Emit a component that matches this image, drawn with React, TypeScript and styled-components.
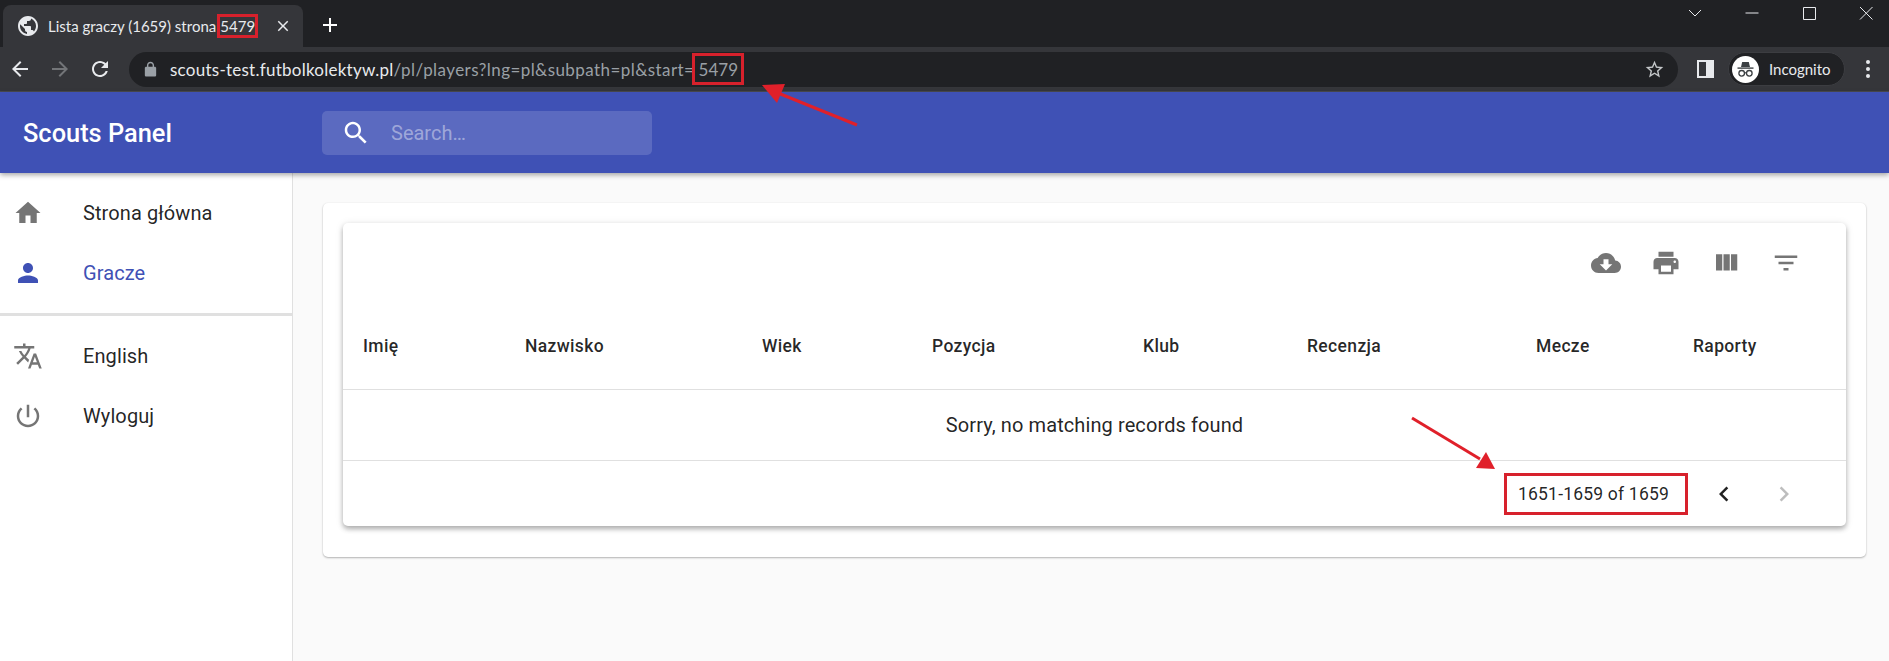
import React from "react";
import styled, { createGlobalStyle } from "styled-components";

const Global = createGlobalStyle`
  html, body { margin: 0; padding: 0; height: 100%; background: #fafafa; }
  * { box-sizing: border-box; }
  #root { height: 100%; }
`;

const P = {
  home: "M10 20v-6h4v6h5v-8h3L12 3 2 12h3v8z",
  person: "M12 12c2.21 0 4-1.79 4-4s-1.79-4-4-4-4 1.79-4 4 1.79 4 4 4zm0 2c-2.67 0-8 1.34-8 4v2h16v-2c0-2.66-5.33-4-8-4z",
  translate: "M12.87 15.07l-2.54-2.51.03-.03c1.74-1.94 2.98-4.17 3.71-6.53H17V4h-7V2H8v2H1v1.99h11.17C11.5 7.92 10.44 9.75 9 11.35 8.07 10.32 7.3 9.19 6.69 8h-2c.73 1.63 1.73 3.17 2.98 4.56l-5.09 5.02L4 19l5-5 3.11 3.11.76-2.04zM18.5 10h-2L12 22h2l1.12-3h4.75L21 22h2l-4.5-12zm-2.62 7l1.62-4.33L19.12 17h-3.24z",
  power: "M13 3h-2v10h2V3zm4.83 2.17l-1.42 1.42C17.99 7.86 19 9.81 19 12c0 3.87-3.13 7-7 7s-7-3.13-7-7c0-2.19 1.01-4.14 2.58-5.42L6.17 5.17C4.23 6.82 3 9.26 3 12c0 4.97 4.03 9 9 9s9-4.03 9-9c0-2.74-1.23-5.18-3.17-6.83z",
  search: "M15.5 14h-.79l-.28-.27C15.41 12.59 16 11.11 16 9.5 16 5.91 13.09 3 9.5 3S3 5.91 3 9.5 5.91 16 9.5 16c1.61 0 3.09-.59 4.23-1.57l.27.28v.79l5 4.99L20.49 19l-4.99-5zm-6 0C7.01 14 5 11.99 5 9.5S7.01 5 9.5 5 14 7.01 14 9.5 11.99 14 9.5 14z",
  cloud: "M19.35 10.04C18.67 6.59 15.64 4 12 4 9.11 4 6.6 5.64 5.35 8.04 2.34 8.36 0 10.91 0 14c0 3.31 2.69 6 6 6h13c2.76 0 5-2.24 5-5 0-2.64-2.05-4.78-4.65-4.96zM17 13l-5 5-5-5h3V9h4v4h3z",
  print: "M19 8H5c-1.66 0-3 1.34-3 3v6h4v4h12v-4h4v-6c0-1.66-1.34-3-3-3zm-3 11H8v-5h8v5zm3-7c-.55 0-1-.45-1-1s.45-1 1-1 1 .45 1 1-.45 1-1 1zm-1-9H6v4h12V3z",
  columns: "M10 18h5V5h-5v13zm-6 0h5V5H4v13zM16 5v13h5V5h-5z",
  filter: "M10 18h4v-2h-4v2zM3 6v2h18V6H3zm3 7h12v-2H6v2z",
  left: "M15.41 7.41L14 6l-6 6 6 6 1.41-1.41L10.83 12z",
  right: "M10 6L8.59 7.41 13.17 12l-4.58 4.59L10 18l6-6z",
  globe: "M12 2C6.48 2 2 6.48 2 12s4.48 10 10 10 10-4.48 10-10S17.52 2 12 2zm-1 17.93c-3.95-.49-7-3.85-7-7.93 0-.62.08-1.21.21-1.79L9 15v1c0 1.1.9 2 2 2v1.93zm6.9-2.54c-.26-.81-1-1.39-1.9-1.39h-1v-3c0-.55-.45-1-1-1H8v-2h2c.55 0 1-.45 1-1V7h2c1.1 0 2-.9 2-2v-.41c2.93 1.19 5 4.06 5 7.41 0 2.08-.8 3.97-2.1 5.39z",
  star: "M22 9.24l-7.19-.62L12 2 9.19 8.63 2 9.24l5.46 4.73L5.82 21 12 17.27 18.18 21l-1.63-7.03L22 9.24zM12 15.4l-3.76 2.27 1-4.28-3.32-2.88 4.38-.38L12 6.1l1.71 4.04 4.38.38-3.32 2.88 1 4.28L12 15.4z",
  close: "M19 6.41L17.59 5 12 10.59 6.41 5 5 6.41 10.59 12 5 17.59 6.41 19 12 13.41 17.59 19 19 17.59 13.41 12z",
  plus: "M19 13h-6v6h-2v-6H5v-2h6V5h2v6h6v2z",
  back: "M20 11H7.83l5.59-5.59L12 4l-8 8 8 8 1.41-1.41L7.83 13H20v-2z",
  forward: "M12 4l-1.41 1.41L16.17 11H4v2h12.17l-5.58 5.59L12 20l8-8z",
  reload: "M17.65 6.35C16.2 4.9 14.21 4 12 4c-4.42 0-7.99 3.58-7.99 8s3.57 8 7.99 8c3.73 0 6.84-2.55 7.73-6h-2.08c-.82 2.33-3.04 4-5.65 4-3.31 0-6-2.69-6-6s2.69-6 6-6c1.66 0 3.14.69 4.22 1.78L13 11h7V4l-2.35 2.35z",
  lock: "M18 8h-1V6c0-2.76-2.24-5-5-5S7 3.24 7 6v2H6c-1.1 0-2 .9-2 2v10c0 1.1.9 2 2 2h12c1.1 0 2-.9 2-2V10c0-1.1-.9-2-2-2zM9 6c0-1.66 1.34-3 3-3s3 1.34 3 3v2H9V6z",
};

const Svg = styled.svg<{ $size: number; $color: string }>`
  width: ${(p) => p.$size}px;
  height: ${(p) => p.$size}px;
  fill: ${(p) => p.$color};
  flex: none;
  display: block;
`;

const Icon = ({ d, size = 30, color = "#757575" }: { d: string; size?: number; color?: string }) => (
  <Svg viewBox="0 0 24 24" $size={size} $color={color}>
    <path d={d} />
  </Svg>
);

const Page = styled.div`
  position: relative;
  height: 661px;
  overflow: hidden;
  display: flex;
  flex-direction: column;
  background: #fafafa;
  font-family: Roboto, "Liberation Sans", sans-serif;
`;

const TabStrip = styled.div`
  height: 47px;
  flex: none;
  display: flex;
  align-items: flex-end;
  background: #202124;
  padding-left: 3px;
`;

const Tab = styled.div`
  width: 300px;
  height: 42px;
  display: flex;
  align-items: center;
  background: #35363a;
  border-radius: 8px 8px 0 0;
  padding-left: 13px;
  color: #e8eaed;
  font: 15px Lato, "Open Sans", sans-serif;
  white-space: nowrap;
`;

const TabTitle = styled.span`
  margin-left: 8px;
  display: flex;
  align-items: center;
`;

const Marked = styled.span`
  border: 3px solid #d7212c;
  display: inline-flex;
  align-items: center;
  justify-content: center;
`;

const TabMark = styled(Marked)`
  width: 41px;
  height: 24px;
  margin-left: 1px;
`;

const TabClose = styled.div`
  margin-left: 16px;
`;

const NewTab = styled.div`
  margin: 0 0 10px 15px;
  align-self: flex-end;
`;

const WindowControls = styled.div`
  margin-left: auto;
  align-self: flex-start;
  height: 25px;
  padding-right: 15px;
  display: flex;
  align-items: center;
  gap: 41px;
`;

const WinSvg = styled.svg`
  width: 16px;
  height: 16px;
  stroke: #e8eaed;
  fill: none;
  stroke-width: 1;
  display: block;
`;

const Toolbar = styled.div`
  height: 45px;
  flex: none;
  display: flex;
  align-items: center;
  background: #35363a;
  padding: 0 19px 0 8px;
  border-bottom: 1px solid #4a4b50;
`;

const NavGroup = styled.div`
  display: flex;
  gap: 16px;
`;

const Omnibox = styled.div`
  margin-left: 17px;
  flex: 1;
  height: 35px;
  border-radius: 18px;
  background: #202124;
  display: flex;
  align-items: center;
  padding: 0 13px;
  font: 17px Lato, "Open Sans", sans-serif;
  color: #9aa0a6;
  white-space: nowrap;
`;

const Url = styled.span`
  margin-left: 11px;
  display: flex;
  align-items: center;
`;

const Host = styled.span`
  color: #e8eaed;
  letter-spacing: 0.25px;
`;

const Path = styled.span`
  letter-spacing: 0.43px;
`;

const UrlMark = styled(Marked)`
  width: 52px;
  height: 32px;
  margin-left: -2px;
`;

const Star = styled.div`
  margin-left: auto;
`;

const SidePanel = styled.div`
  margin-left: 19px;
  width: 17px;
  height: 18px;
  border: 2px solid #e8eaed;
  border-right-width: 8px;
  flex: none;
`;

const ProfilePill = styled.div`
  margin-left: 14px;
  width: 117px;
  height: 34px;
  flex: none;
  border-radius: 17px;
  background: #202124;
  border: 1px solid #3c3d41;
  display: flex;
  align-items: center;
  padding-left: 3px;
  color: #e8eaed;
  font: 15px Lato, "Open Sans", sans-serif;
`;

const Avatar = styled.svg`
  width: 27px;
  height: 27px;
  display: block;
  flex: none;
`;

const PillLabel = styled.span`
  margin-left: 10px;
`;

const Dots = styled.div`
  margin-left: 21px;
  display: flex;
  flex-direction: column;
  gap: 3px;
`;

const Dot = styled.i`
  width: 4px;
  height: 4px;
  border-radius: 50%;
  background: #e8eaed;
  display: block;
`;

const AppBar = styled.header`
  position: relative;
  z-index: 2;
  height: 81px;
  flex: none;
  display: flex;
  align-items: center;
  background: #3f51b5;
  box-shadow: 0 2px 5px rgba(0, 0, 0, 0.35);
`;

const Brand = styled.h1`
  width: 322px;
  margin: 0;
  padding-left: 23px;
  flex: none;
  color: #fff;
  font-size: 25.4px;
  font-weight: 500;
`;

const SearchBox = styled.div`
  width: 330px;
  height: 44px;
  border-radius: 5px;
  background: rgba(255, 255, 255, 0.15);
  display: flex;
  align-items: center;
  padding-left: 19px;
`;

const SearchInput = styled.input`
  margin-left: 20px;
  width: 240px;
  border: 0;
  outline: 0;
  background: transparent;
  color: #fff;
  font: 20px Roboto, sans-serif;
  padding: 0;
  &::placeholder {
    color: rgba(255, 255, 255, 0.42);
    opacity: 1;
  }
`;

const Body = styled.div`
  flex: 1;
  display: flex;
  min-height: 0;
`;

const Sidebar = styled.nav`
  width: 293px;
  flex: none;
  background: #fff;
  border-right: 1px solid #e0e0e0;
  padding-top: 10px;
`;

const NavItem = styled.div<{ $active?: boolean }>`
  height: 60px;
  display: flex;
  align-items: center;
  padding-left: 13px;
  gap: 40px;
  font-size: 20px;
  letter-spacing: 0.1px;
  color: ${(p) => (p.$active ? "#3f51b5" : "rgba(0,0,0,0.87)")};
`;

const NavDivider = styled.hr`
  margin: 10px 0 10px;
  border: 0;
  height: 3px;
  background: #e0e0e0;
`;

const Main = styled.main`
  flex: 1;
  padding: 30px 23px 0 30px;
`;

const OuterPaper = styled.section`
  height: 354px;
  padding: 20px;
  background: #fff;
  border-radius: 5px;
  box-shadow: 0 1px 2px rgba(0, 0, 0, 0.28), 0 0 2px rgba(0, 0, 0, 0.06);
`;

const TablePaper = styled.div`
  height: 303px;
  background: #fff;
  border-radius: 5px;
  box-shadow: 0 3px 5px rgba(0, 0, 0, 0.28), 0 1px 8px rgba(0, 0, 0, 0.1);
  display: flex;
  flex-direction: column;
`;

const TableTools = styled.div`
  height: 80px;
  flex: none;
  display: flex;
  align-items: center;
  justify-content: flex-end;
  gap: 30px;
  padding-right: 45px;
`;

const HeadRow = styled.div`
  height: 87px;
  flex: none;
  display: grid;
  grid-template-columns: 182px 237px 170px 211px 164px 229px 157px 1fr;
  align-items: center;
  padding-bottom: 1px;
  border-bottom: 1px solid #e0e0e0;
`;

const HeadCell = styled.div`
  padding-left: 20px;
  &:not(:first-child) {
    padding-left: 0;
  }
  font-size: 17.5px;
  font-weight: 500;
  letter-spacing: 0.35px;
  color: rgba(0, 0, 0, 0.85);
`;

const EmptyRow = styled.div`
  height: 71px;
  flex: none;
  display: flex;
  align-items: center;
  justify-content: center;
  border-bottom: 1px solid #e0e0e0;
  font-size: 20px;
  letter-spacing: 0.1px;
  color: rgba(0, 0, 0, 0.87);
`;

const Footer = styled.div`
  flex: 1;
  display: flex;
  align-items: center;
  justify-content: flex-end;
  padding-right: 47px;
`;

const PageMark = styled(Marked)`
  width: 184px;
  height: 42px;
  margin-right: 21px;
  padding-left: 11px;
  justify-content: flex-start;
  font-size: 17.5px;
  letter-spacing: 0.2px;
  color: rgba(0, 0, 0, 0.87);
`;

const PageButtons = styled.div`
  display: flex;
  gap: 30px;
`;

const Annotations = styled.svg`
  position: absolute;
  inset: 0;
  z-index: 5;
  width: 1889px;
  height: 661px;
  pointer-events: none;
`;

const heads = ["Imię", "Nazwisko", "Wiek", "Pozycja", "Klub", "Recenzja", "Mecze", "Raporty"];

export default function App() {
  return (
    <Page>
      <Global />
      <TabStrip>
        <Tab>
          <Icon d={P.globe} size={24} color="#e8eaed" />
          <TabTitle>
            Lista graczy (1659) strona<TabMark>5479</TabMark>
          </TabTitle>
          <TabClose>
            <Icon d={P.close} size={18} color="#e8eaed" />
          </TabClose>
        </Tab>
        <NewTab>
          <Icon d={P.plus} size={24} color="#fff" />
        </NewTab>
        <WindowControls>
          <WinSvg viewBox="0 0 16 16"><path d="M2 5l6 6 6-6" /></WinSvg>
          <WinSvg viewBox="0 0 16 16"><path d="M1.5 8h13" /></WinSvg>
          <WinSvg viewBox="0 0 16 16"><path d="M2.5 2.5h12v12h-12z" /></WinSvg>
          <WinSvg viewBox="0 0 16 16"><path d="M2 2l12.5 12.5M14.5 2L2 14.5" /></WinSvg>
        </WindowControls>
      </TabStrip>
      <Toolbar>
        <NavGroup>
          <Icon d={P.back} size={24} color="#e8eaed" />
          <Icon d={P.forward} size={24} color="#737578" />
          <Icon d={P.reload} size={24} color="#e8eaed" />
        </NavGroup>
        <Omnibox>
          <Icon d={P.lock} size={17} color="#9aa0a6" />
          <Url>
            <Host>scouts-test.futbolkolektyw.pl</Host>
            <Path>/pl/players?lng=pl&amp;subpath=pl&amp;start=</Path>
            <UrlMark>5479</UrlMark>
          </Url>
          <Star>
            <Icon d={P.star} size={21} color="#c4c7c9" />
          </Star>
        </Omnibox>
        <SidePanel />
        <ProfilePill>
          <Avatar viewBox="0 0 27 27">
            <circle cx="13.5" cy="13.5" r="13.5" fill="#fff" />
            <path d="M9 11l1.2-5h6.6L18 11z" fill="#3c4043" />
            <path d="M5.5 11.4h16v1.4h-16z" fill="#3c4043" />
            <circle cx="9.7" cy="17.3" r="2.8" fill="none" stroke="#3c4043" strokeWidth="1.3" />
            <circle cx="17.3" cy="17.3" r="2.8" fill="none" stroke="#3c4043" strokeWidth="1.3" />
            <path d="M12.4 16.8h2.2" stroke="#3c4043" strokeWidth="1.2" />
          </Avatar>
          <PillLabel>Incognito</PillLabel>
        </ProfilePill>
        <Dots>
          <Dot />
          <Dot />
          <Dot />
        </Dots>
      </Toolbar>
      <AppBar>
        <Brand>Scouts Panel</Brand>
        <SearchBox>
          <Icon d={P.search} color="#fff" />
          <SearchInput placeholder="Search…" readOnly />
        </SearchBox>
      </AppBar>
      <Body>
        <Sidebar>
          <NavItem>
            <Icon d={P.home} />
            Strona główna
          </NavItem>
          <NavItem $active>
            <Icon d={P.person} color="#3f51b5" />
            Gracze
          </NavItem>
          <NavDivider />
          <NavItem>
            <Icon d={P.translate} />
            English
          </NavItem>
          <NavItem>
            <Icon d={P.power} />
            Wyloguj
          </NavItem>
        </Sidebar>
        <Main>
          <OuterPaper>
            <TablePaper>
              <TableTools>
                <Icon d={P.cloud} />
                <Icon d={P.print} />
                <Icon d={P.columns} />
                <Icon d={P.filter} />
              </TableTools>
              <HeadRow>
                {heads.map((h) => (
                  <HeadCell key={h}>{h}</HeadCell>
                ))}
              </HeadRow>
              <EmptyRow>Sorry, no matching records found</EmptyRow>
              <Footer>
                <PageMark>1651-1659 of 1659</PageMark>
                <PageButtons>
                  <Icon d={P.left} color="rgba(0,0,0,0.87)" />
                  <Icon d={P.right} color="rgba(0,0,0,0.26)" />
                </PageButtons>
              </Footer>
            </TablePaper>
          </OuterPaper>
        </Main>
      </Body>
      <Annotations viewBox="0 0 1889 661">
        <path d="M857 125L778 93" stroke="#e0202a" strokeWidth="3" />
        <path d="M762 85l23-1-8 19z" fill="#e0202a" />
        <path d="M1412 418L1480 459" stroke="#e0202a" strokeWidth="3" />
        <path d="M1495 469l-19-1 10-16z" fill="#e0202a" />
      </Annotations>
    </Page>
  );
}
